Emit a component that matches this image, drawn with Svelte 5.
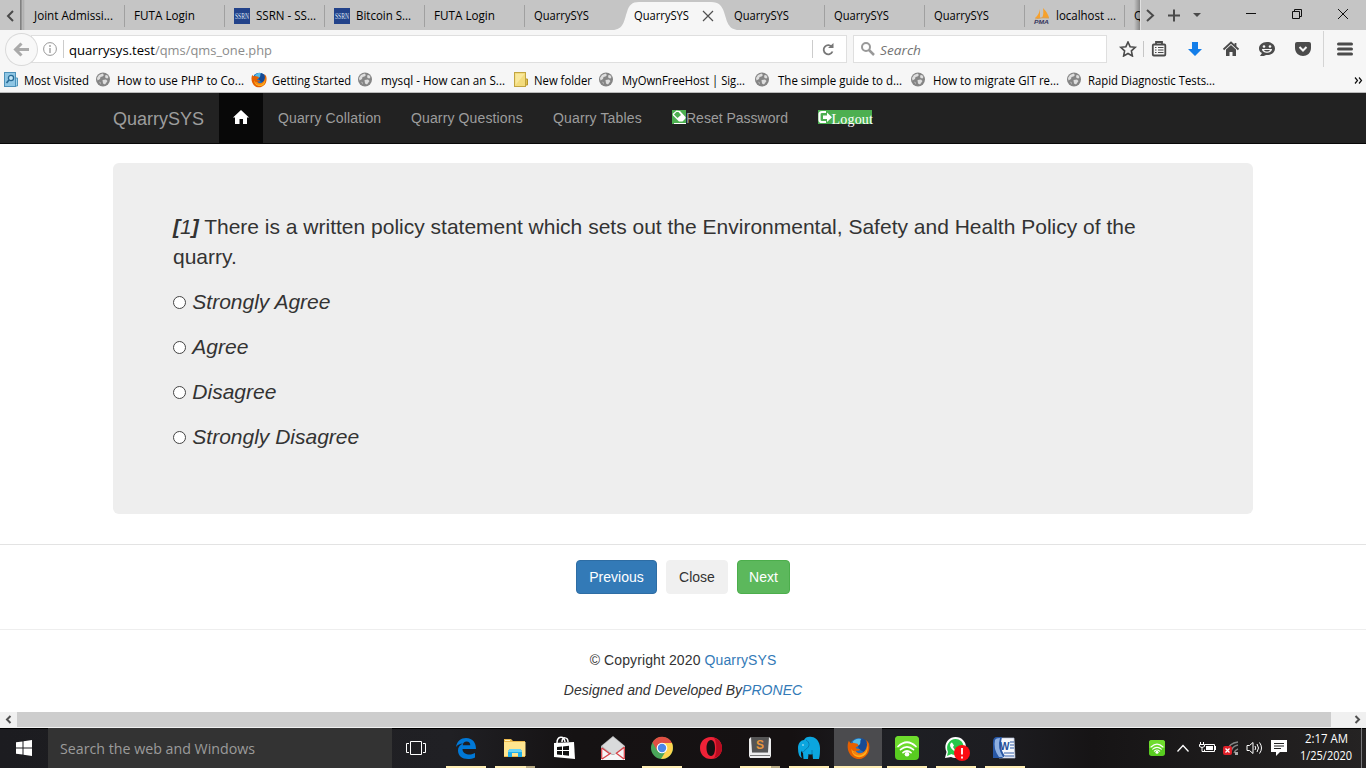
<script>
  const tabs = [
    { text: 'Joint Admissi...', w: 79 },
    { text: 'FUTA Login', w: 61 },
    { text: 'SSRN - SS...', w: 60, icon: 'ssrn' },
    { text: 'Bitcoin S...', w: 55, icon: 'ssrn' },
    { text: 'FUTA Login', w: 61 },
    { text: 'QuarrySYS', w: 55 },
    { text: 'QuarrySYS', w: 55, active: true },
    { text: 'QuarrySYS', w: 55 },
    { text: 'QuarrySYS', w: 55 },
    { text: 'QuarrySYS', w: 55 },
    { text: 'localhost ...', w: 60, icon: 'pma' }
  ];
  const bookmarks = [
    { text: 'Most Visited', w: 65, icon: 'visited', slot: 20, cell: 92 },
    { text: 'How to use PHP to Co...', w: 127, icon: 'globe', slot: 21, cell: 155 },
    { text: 'Getting Started', w: 79, icon: 'firefox', slot: 21, cell: 107 },
    { text: 'mysql - How can an S...', w: 124, icon: 'globe', slot: 23, cell: 155 },
    { text: 'New folder', w: 58, icon: 'folder', slot: 21, cell: 86 },
    { text: 'MyOwnFreeHost | Sig...', w: 123, icon: 'globe', slot: 23, cell: 156 },
    { text: 'The simple guide to d...', w: 124, icon: 'globe', slot: 23, cell: 156 },
    { text: 'How to migrate GIT re...', w: 126, icon: 'globe', slot: 22, cell: 156 },
    { text: 'Rapid Diagnostic Tests...', w: 127, icon: 'globe', slot: 21, cell: 150 }
  ];
  const answers = ['Strongly Agree', 'Agree', 'Disagree', 'Strongly Disagree'];
  const apps = [
    { icon: 'edge', bar: 'one' },
    { icon: 'explorer', bar: 'many' },
    { icon: 'store' },
    { icon: 'mail' },
    { icon: 'chrome', bar: 'one' },
    { icon: 'opera' },
    { icon: 'sublime', bar: 'many' },
    { icon: 'elephant', bar: 'one' },
    { icon: 'firefox', bar: 'full' },
    { icon: 'hotspot', bar: 'one' },
    { icon: 'whatsapp', bar: 'one' },
    { icon: 'word', bar: 'one' }
  ];
</script>

{#snippet label(text, w, h, y, size = 12, fill = '#000', italic = false)}
  <svg class="label" width={w} height={h}>
    <text x="0" {y} font-size={size} {fill} font-style={italic ? 'italic' : 'normal'} textLength={w} lengthAdjust="spacingAndGlyphs">{text}</text>
  </svg>
{/snippet}

{#snippet firefox(size)}
  <svg width={size} height={size} viewBox="0 0 24 24">
    <circle cx="12.5" cy="11" r="10" fill="#1f6fc0" />
    <path d="M8 3C12 0 19 1 22 7c1 5-2 8-4 9l-5-3z" fill="#174a94" />
    <path d="M6 5c3-4 7-4 9-3-2 2 0 4-2 6l-5 3z" fill="#55bce9" />
    <path d="M2 4C0 8 .5 13 2 16c3 7 11 9 16 5 5-3 6-9 5-14-1-2-2-3-3-4 2 6 1 10-2 12-3 3-8 2-9-1 2 1 4 0 5-1-2-1-4 0-5-2l3-2-1-2-5-1C4 7 3 6 2 4z" fill="#e66000" />
    <path d="M20 4c2 6 1 10-2 12-4 3-8 2-9-1-2 1-4-1-4-3-1 5 3 9 8 9 7 0 11-7 7-17z" fill="#ffb11a" />
    <path d="M20 8c1 5-2 8-5 9-2 1-5 0-6-2-2 1-3 0-4-1 2 6 10 7 14 2 2-3 2-5 1-8z" fill="#f28115" />
  </svg>
{/snippet}

{#snippet hotspot(size)}
  <svg width={size} height={size} viewBox="0 0 24 24">
    <rect width="24" height="24" rx="4" fill="#58cc20" />
    <path d="M0 4a4 4 0 0 1 4-4h16a4 4 0 0 1 4 4v8H0z" fill="#6edb2d" />
    <g fill="none" stroke="#fff" stroke-width="1.700" stroke-linecap="round">
      <path d="M3 10.500Q12 2 21 10.500M5.500 13.700q6.500-5.500 13 0M8 16.700q4-3.400 8 0" />
    </g>
    <circle cx="12" cy="18.300" r="2.300" fill="#fff" />
  </svg>
{/snippet}

{#snippet smallIcon(kind)}
  {#if kind === 'ssrn'}
    <svg class="open" width="16" height="16"><rect width="16" height="16" fill="#22428a" /><text x="1" y="11" font-family="Liberation Serif, serif" font-size="8" fill="#dce4f4" textLength="14" lengthAdjust="spacingAndGlyphs">SSRN</text></svg>
  {:else if kind === 'pma'}
    <svg class="open" width="16" height="16"><path d="M6 1v9H1q4-3 5-9zM9 0q5 5 6 10H8Q10 6 9 0z" fill="#f7a12c" /><path d="M1 11q7-2 14-1" stroke="#d6a05b" fill="none" /><text x="0" y="15.500" font-size="6" font-weight="bold" font-style="italic" fill="#35355e" textLength="15" lengthAdjust="spacingAndGlyphs">PMA</text></svg>
  {:else if kind === 'globe'}
    <svg width="15" height="15" viewBox="0 0 15 15"><circle cx="7" cy="7.500" r="7" fill="#858585" /><path d="M1 6 3 3l3.500-1.500L8 3 6.500 4.500l-2 .5L4 7 1.500 8.500zM9 3.500l2-.5 1.500 2-1 1.500L9.500 6zM6.500 8l3.500-.5 1.500 1.500L9 12.500 7 11.500zM3 9.500l1.500 1 .5 2z" fill="#dedede" /></svg>
  {:else if kind === 'visited'}
    <svg width="15" height="16" viewBox="0 0 15 16"><path d="M10 6h3.500v8H10z" fill="#a4d4ec" stroke="#5296bb" /><rect x=".5" y=".5" width="11" height="14" fill="#8fc6e4" stroke="#4c91b9" /><circle cx="7" cy="6" r="2.600" fill="#c4e5f5" stroke="#286b96" stroke-width="1.300" /><path d="M5 8 2.500 11" stroke="#286b96" stroke-width="1.700" /></svg>
  {:else if kind === 'folder'}
    <svg class="folder" width="15" height="16" viewBox="0 0 15 16"><path d="M11 7h2.500v6H10z" fill="#e2c34e" stroke="#b4952b" /><rect x=".5" y=".5" width="11" height="14" fill="#f3dc7d" stroke="#c2a541" /><path d="M1.500 13V2h9z" fill="#fbedaa" opacity=".7" /></svg>
  {:else if kind === 'firefox'}
    {@render firefox(16)}
  {/if}
{/snippet}

{#snippet appIcon(kind)}
  {#if kind === 'firefox'}
    {@render firefox(23)}
  {:else if kind === 'hotspot'}
    {@render hotspot(24)}
  {:else}
    <svg width="24" height="24" viewBox="0 0 24 24">
      {#if kind === 'edge'}
        <path d="M2 11C3 5 7 2 12 2c7 0 10 5 10 11H8.500c0 4 3.500 5.500 7 5.500 2 0 4-.6 5.500-1.500v4.500C19 22.700 16 23 14 23c-6 0-10-3.500-10-8.500 0-3 1.500-5.500 5-7C6 7.500 3.500 9 2 11zm6.700-1.700h7.600C16.300 7 15 5.500 12.700 5.500S8.900 7 8.700 9.300z" fill="#0078d7" />
      {:else if kind === 'explorer'}
        <path d="M1 4V3h7l2 2h12v16H1z" fill="#ebb94d" /><path d="M1 6h21.500v14H1z" fill="#ffe58f" /><path d="M2 4h5v1H2z" fill="#fff3bf" /><path d="M5 21v-6l2-2h10l2 2v6h-4v-4H9v4z" fill="#21b0ea" /><path d="M5 16v-1l2-2h10l2 2v1z" fill="#68d5f6" />
      {:else if kind === 'store'}
        <path d="M2 7l20-1 1 17L2 21z" fill="#fff" /><path d="M5 7c0-7 7-8 8-1M10 6c0-6 6-5 6 0" fill="none" stroke="#fff" stroke-width="1.500" /><path d="M5 11l5-.5V14H5zM11 10.400l6-.7V14h-6zM5 15h5v4l-5-.5zM11 15h6v4.800l-6-.7z" fill="#111" />
      {:else if kind === 'mail'}
        <path d="M0 10 12 0l12 10v14H0z" fill="#b5b6b7" /><path d="M1 10 12 1l11 9-9 8h-3z" fill="#d9dadb" /><path d="M0 12l11 7h2l11-8v13H0z" fill="#f5f5f6" /><path d="M.7 12v11M23.300 11v12M1 12l8 6M23 11.500l-8 6M1 23l9-6M23 23l-8-6" fill="none" stroke="#d83f45" stroke-width="1.200" />
      {:else if kind === 'chrome'}
        <circle cx="12" cy="12" r="11" fill="#4ba65a" /><path d="M2.500 6.500A11 11 0 0 1 22 7H12L7.500 15z" fill="#e04f43" /><path d="M12 7h10c3 8-2 16-11 16l5.500-9z" fill="#ffd34e" /><circle cx="12" cy="12" r="5.300" fill="#fff" /><circle cx="12" cy="12" r="4.200" fill="#4c87e8" />
      {:else if kind === 'opera'}
        <path fill-rule="evenodd" d="M12 1C5 1 1 6 1 12s4 11 11 11 11-5 11-11S19 1 12 1zm0 3c3 0 4 4 4 8s-1 8-4 8-4.500-4-4.500-8S9 4 12 4z" fill="#ee2237" /><path d="M15 2c5 1 8 5 8 10s-3 9-8 10c3-3 3-17 0-20z" fill="#b80c20" />
      {:else if kind === 'sublime'}
        <path d="M3 1h18l2 2v17l-1 2H2l-1-2V3z" fill="#ededed" /><path d="M3 1h18l-1 15H4z" fill="#555" /><path d="M4 16h16v1H4z" fill="#999" /><path d="M2 19h20v1H2z" fill="#777" /><text x="8" y="13" font-size="12" font-weight="bold" fill="#e9963c">S</text>
      {:else if kind === 'elephant'}
        <path d="M1 12c0-5 3-8 6-8 1-3 5-4 8-3 4 0 8 5 8 11 0 3 0 7-1 11h-6l-.5-5q-2 1-4 0L11 23H6.500L6 17l-2-2v4q.5 2 1 3-4-1-4-10z" fill="#0ba6df" /><path d="M9 4c4 2 4 7 0 9M4.500 15c1 1 3 1 4-2M15 18V14" stroke="#0870a5" fill="none" stroke-width=".8" /><circle cx="6" cy="9" r=".7" fill="#fff" />
      {:else if kind === 'whatsapp'}
        <path d="M1 22 2.500 16C-1 9 4 1 11.500 1 18 1 22 6 22 11c0 8-8 13-15 10z" fill="#fff" /><path d="M3 20l1-4C1 9 6 3 11.500 3c9 0 11 12 4 15-3 2-6 1-8 0z" fill="#28c74b" /><path d="M8 6.500l2 3-1 1.500c1 2 2 3 4 4l1.500-1.500 3 1c0 3-3 3-6 1.500C8 14 6 11 6 9c0-1 1-2.500 2-2.500z" fill="#fff" />
      {:else if kind === 'word'}
        <path d="M6 2h15l1 20H6z" fill="#f6f8fc" stroke="#b7c3db" stroke-width=".7" /><path d="M4 1h5C7 9 8 15 12 20l-3 2H0V6q0-5 4-5z" fill="#2857a4" /><path d="M2 4q1-2 5-2Q4 12 10 21H6Q0 13 2 4z" fill="#8eafe0" /><path d="M17 6h4M17 9h4M17 12h4M11 17h10M12 20h9" stroke="#315da7" stroke-width="1.200" /><text x="7" y="14" font-size="10" font-weight="bold" fill="#244e98">W</text>
      {/if}
    </svg>
  {/if}
{/snippet}

<div class="screen">
  <div class="tabstrip">
    <div class="scroll-left"><svg width="20" height="30"><path d="M13 11 8 16l5 5" fill="none" stroke="#4a4a4a" stroke-width="2" /></svg></div>
    <div class="shade left"></div>
    {#each tabs as tab, i}
      <div class="tab" class:active={tab.active} class:plain={i === 5}>
        {#if tab.active}
          <svg class="tab-shape" width="128" height="30"><path d="M0 30C12 30 12 20 15 12 17 5 20 2 27 2h72c8 0 11 4 13 10 3 9 4 18 15 18z" fill="#f6f6f6" /></svg>
        {/if}
        <div class="tab-content">
          {#if tab.icon}<div class="tab-icon">{@render smallIcon(tab.icon)}</div>{/if}
          {@render label(tab.text, tab.w, 30, 20)}
          {#if tab.active}
            <svg class="close" width="12" height="30"><path d="M1 11l10 10M11 11 1 21" stroke="#505050" stroke-width="1.200" /></svg>
          {/if}
        </div>
      </div>
    {/each}
    <div class="cut">{@render label('Q', 9, 30, 20)}</div>
    <svg class="tab-buttons" width="65" height="30"><path d="M6 10l6 5.500L6 21" fill="none" stroke="#4a4a4a" stroke-width="2" /><path d="M27 15.500h12M33 9.500v12" stroke="#4a4a4a" stroke-width="2" /><path d="M52 13h8l-4 4z" fill="#4a4a4a" /></svg>
    <svg width="160" height="30"><g fill="none" stroke="#111"><path d="M40 13.500h10M86.500 11.500h7v7h-7zM88.500 11.500v-2h7v7h-2M132 9l10 10M142 9l-10 10" /></g></svg>
  </div>

  <div class="toolbar">
    <div class="back"><svg width="31" height="31"><path d="M9 15.500h14M15.500 9.500l-6 6 6 6" fill="none" stroke="#aaa" stroke-width="3" /></svg></div>
    <div class="url">
      <svg width="25" height="26"><circle cx="12" cy="13" r="6.400" fill="none" stroke="#989898" /><path d="M12 12v5M12 9v2" stroke="#989898" stroke-width="1.300" /></svg>
      <div class="divider"></div>
      <div class="address">{@render label('quarrysys.test', 86, 26, 19, 13.5)}{@render label('/qms/qms_one.php', 117, 26, 19, 13.5, '#8b8b8b')}</div>
      <div class="divider"></div>
      <svg width="33" height="26"><path d="M19 11A4.600 4.600 0 1 0 19.500 15.500" fill="none" stroke="#777" stroke-width="1.800" /><path d="M15 12h5.500V7z" fill="#777" /></svg>
    </div>
    <div class="search">
      <svg width="26" height="26"><circle cx="12" cy="11" r="4" fill="none" stroke="#999" stroke-width="2" /><path d="M15 14l5 5" stroke="#999" stroke-width="2.500" /></svg>
      {@render label('Search', 41, 26, 19, 13.5, '#737373', true)}
    </div>
    <div class="tools">
      <svg style:width="32px" height="16" viewBox="-8 0 32 16"><path d="M8 1l2.100 4.700 5.100.6-3.800 3.500 1 5.200L8 12.500 3.600 15l1-5.200L.8 6.300l5.100-.6z" fill="none" stroke="#4b4b4b" stroke-width="1.600" /></svg>
      <div class="rule"></div>
      <svg style:width="30px" height="16" viewBox="-7 0 30 16"><path d="M5 3V1h6v2" fill="none" stroke="#4b4b4b" stroke-width="1.800" /><rect x="1.800" y="3.500" width="12.500" height="11" rx="1" fill="none" stroke="#4b4b4b" stroke-width="1.800" /><path d="M4 6.500h1.500M7 6.500h5.500M4 9h1.500M7 9h5.500M4 11.500h1.500M7 11.500h5.500" stroke="#4b4b4b" stroke-width="1.200" /></svg>
      <svg style:width="42px" height="16" viewBox="-13 0 42 16"><path d="M5 1h6v7h4l-7 7-7-7h4z" fill="#147ee9" /></svg>
      <svg style:width="30px" height="16" viewBox="-7 0 30 16"><path d="M.5 8.500 8 1.500l7.500 7M12.500 2v4" fill="none" stroke="#4b4b4b" stroke-width="1.800" /><path d="M3 8.500 8 4l5 4.500V15H9.500v-4h-3v4H3z" fill="#4b4b4b" /></svg>
      <svg style:width="42px" height="16" viewBox="-13 0 42 16"><path d="M8 1c5 0 8 3 8 6.500S13 14 8 14c-1 0-2 0-3 1H1l2-3C1 11 0 9.500 0 7.500 0 4 3 1 8 1z" fill="#4b4b4b" /><circle cx="5" cy="5.500" r="1.300" fill="#f6f6f6" /><circle cx="11" cy="5.500" r="1.300" fill="#f6f6f6" /><path d="M3 8h10c0 5-10 5-10 0z" fill="#f6f6f6" /><path d="M5 9h6c-1 2-5 2-6 0z" fill="#4b4b4b" /></svg>
      <svg style:width="30px" height="16" viewBox="-7 0 30 16"><path d="M0 3q0-2 2-2h12q2 0 2 2v4c0 5-4 8-8 8s-8-3-8-8z" fill="#4b4b4b" /><path d="M4.500 6 8 9.500 11.500 6" fill="none" stroke="#f6f6f6" stroke-width="2" /></svg>
      <div class="menu"><svg width="16" height="16"><path d="M1.500 3h13M1.500 8h13M1.500 13h13" stroke="#4b4b4b" stroke-width="3" stroke-linecap="round" /></svg></div>
    </div>
  </div>

  <div class="bookmarks">
    {#each bookmarks as b}
      <div class="bookmark" style:width="{b.cell}px">
        <div class="bookmark-icon" style:width="{b.slot}px">{@render smallIcon(b.icon)}</div>
        {@render label(b.text, b.w, 24, 17)}
      </div>
    {/each}
    <svg class="more" width="10" height="24"><path d="M1 9.500l2.500 3L1 15.500M5 9.500l2.500 3-2.500 3" fill="none" stroke="#111" stroke-width="1.200" /></svg>
  </div>

  <main>
    <nav>
      <div class="brand">QuarrySYS</div>
      <div class="item home"><svg width="16" height="14" viewBox="0 0 16 14"><path d="M8 0l8 7.500h-2V14h-4V9H6.500v5H2V7.500H0z" fill="#fff" /></svg></div>
      <div class="item collation">Quarry Collation</div>
      <div class="item questions">Quarry Questions</div>
      <div class="item tables">Quarry Tables</div>
      <div class="item reset"><svg class="green" width="14" height="14"><path d="M4.500.5 8 1l5.500 6q.5 1-.5 2l-2.500 2.500H7L1 5.500q-.8-1 0-2z" fill="#fff" /><path d="M4.500 2 6.500 2 9 5 5.500 8 2 4.500z" fill="#4caf50" /><path d="M2 13.500h12" stroke="#fff" /></svg>Reset Password</div>
      <div class="item logout"><span><svg width="14" height="14"><path d="M8 2H4Q1.500 2 1.500 4v6q0 2 2.500 2h4" fill="none" stroke="#fff" stroke-width="2.200" /><path d="M5 5.500h4V2.500l5 4.700-5 4.800V9H5z" fill="#fff" /></svg><b>Logout</b></span></div>
    </nav>

    <section class="jumbotron">
      <p><em><strong>[</strong>1<strong>]</strong></em> There is a written policy statement which sets out the Environmental, Safety and Health Policy of the quarry.</p>
      {#each answers as answer}
        <p class="answer"><span class="radio"></span><em>{answer}</em></p>
      {/each}
    </section>

    <div class="actions">
      <div class="btn primary">Previous</div>
      <div class="btn plain">Close</div>
      <div class="btn success">Next</div>
    </div>

    <footer>
      <p class="copyright">© Copyright 2020 <a>QuarrySYS</a></p>
      <p class="credit"><em>Designed and Developed By<a>PRONEC</a></em></p>
    </footer>
  </main>

  <div class="scrollbar">
    <svg width="17" height="15"><path d="M10.500 4 7 7.500l3.500 3.500" fill="none" stroke="#505050" stroke-width="2" /></svg>
    <div class="thumb"></div>
    <svg width="35" height="15"><path d="M24.500 4 28 7.500 24.500 11" fill="none" stroke="#505050" stroke-width="2" /></svg>
  </div>

  <div class="taskbar">
    <div class="start"><svg width="16" height="16"><path d="M0 2.300 6.500 1.400V7.500H0zM7.500 1.200 16 0v7.500H7.500zM0 8.500h6.500v6.100L0 13.700zM7.500 8.500H16V16l-8.500-1.200z" fill="#fff" /></svg></div>
    <div class="task-search">{@render label('Search the web and Windows', 195, 40, 26, 15, '#9b9b9b')}</div>
    <div class="task-view"><svg width="20" height="14"><path d="M4.500.5h11v13h-11zM3 2.500H.5v9H3M17 2.500h2.500v9H17" fill="none" stroke="#fff" /></svg></div>
    <div class="apps">
      {#each apps as app}
        <div class="app" class:current={app.bar === 'full'}>
          {@render appIcon(app.icon)}
          {#if app.icon === 'whatsapp'}
            <svg class="alert" width="16" height="16"><circle cx="8" cy="8" r="8" fill="#fb0b12" /><path d="M8 3v6.500M8 11.500v2" stroke="#fff" stroke-width="1.800" /></svg>
          {/if}
          {#if app.bar}<div class="underline {app.bar}"></div>{/if}
        </div>
      {/each}
    </div>
    <div class="tray">
      {@render hotspot(16)}
      <svg class="chevron" width="14" height="16"><path d="M1.500 11.500 7 5.500l5.500 6" fill="none" stroke="#fff" stroke-width="1.300" /></svg>
      <svg class="battery" width="17" height="16"><path d="M6 4.500h9.500v7h-10v-2" fill="none" stroke="#fff" /><path d="M7 6h7v4H7zM15 6h2v4h-2z" fill="#fff" /><path d="M1.500 2v2.500M4.500 2v2.500M.5 4.500h5v2q-2.500 2-5 0zM3 7v4.500h3" fill="none" stroke="#fff" /></svg>
      <svg class="wifi" width="17" height="16"><g fill="none" stroke="#858585" stroke-width="1.500"><path d="M4 11Q6 3 15 2M8 12q1-6 7-7M11 13q1-3 4-4" /></g><path d="M12 12h3v3h-3z" fill="#aaa" /><rect x="0" y="6" width="9" height="9" rx="2" fill="#df2029" /><path d="M2.500 8.500l4 4M6.500 8.500l-4 4" stroke="#fff" stroke-width="1.300" /></svg>
      <svg class="speaker" width="18" height="16"><path d="M1 5.500h2.500L7 2.500v11l-3.500-3H1z" fill="none" stroke="#fff" /><path d="M9 6q1.500 2 0 4M11 4q3 4 0 8M13.500 2.500q4 5.500 0 11" fill="none" stroke="#fff" /></svg>
      <svg class="note" width="16" height="16"><path d="M0 0h16v12H9l-4 4v-4H0z" fill="#fff" /><path d="M3 3.500h10M3 6h10M3 8.500h7" stroke="#222" /></svg>
    </div>
    <div class="clock">
      {@render label('2:17 AM', 43, 17, 14, 12, '#fff')}
      {@render label('1/25/2020', 52, 17, 14, 12, '#fff')}
    </div>
    <div class="peek"></div>
  </div>
</div>

<style>
  :global(body) { margin: 0; overflow: hidden; }
  svg { display: block; flex: none; }
  .open { overflow: visible; }
  .label { overflow: visible; font-family: 'Open Sans', 'Noto Sans', sans-serif; }
  .screen { width: 1366px; height: 768px; display: flex; flex-direction: column; overflow: hidden; background: #fff; font-family: 'Liberation Sans', Arial, sans-serif; }

  .tabstrip { height: 30px; flex: none; display: flex; background: #c5c5c5; overflow: hidden; }
  .scroll-left { width: 20px; }
  .shade.left { width: 5px; background: linear-gradient(90deg, #777, #9b9b9b 35%, #c5c5c5 40%, #aaa 60%, #c5c5c5); }
  .tab { position: relative; width: 100px; height: 30px; flex: none; display: flex; }
  .tab::after { content: ''; width: 1px; height: 22px; margin: 5px 0 0; background: #a0a0a0; position: absolute; right: 0; }
  .tab.active::after, .tab.plain::after { display: none; }
  .tab-shape { position: absolute; left: -13px; top: 0; }
  .tab-content { position: relative; display: flex; padding-left: 9px; }
  .tab-icon { width: 22px; padding-top: 8px; }
  .close { margin-left: 13px; }
  .cut { width: 16px; flex: none; padding-left: 9px; box-sizing: border-box; overflow: hidden; background: linear-gradient(90deg, #c5c5c5 60%, #858585); border-right: 1px solid #e0e0e0; }
  .tab-buttons { margin-right: auto; }

  .toolbar { height: 38px; flex: none; display: flex; align-items: center; background: #f6f6f6; }
  .back { width: 31px; height: 31px; margin-left: 6px; flex: none; border-radius: 50%; box-shadow: 0 0 0 1px #d9d9d9; background: #f8f8f8; z-index: 1; }
  .url { width: 816px; height: 28px; margin-left: -6px; padding-left: 6px; box-sizing: border-box; display: flex; align-items: center; background: #fff; border: 1px solid #dfdfdf; }
  .divider { width: 1px; height: 18px; flex: none; background: #ccc; }
  .address { display: flex; flex: 1; padding-left: 5px; }
  .search { width: 254px; height: 28px; margin-left: 6px; box-sizing: border-box; display: flex; align-items: center; background: #fff; border: 1px solid #dfdfdf; }
  .tools { display: flex; align-items: center; margin-left: 5px; }
  .rule { width: 1px; height: 16px; margin-left: -1px; background: #c6c6c6; }
  .menu { width: 42px; height: 36px; margin-left: 5px; border-left: 1px solid #d4d4d4; display: flex; align-items: center; justify-content: center; }

  .bookmarks { height: 25px; flex: none; display: flex; padding-left: 4px; box-sizing: border-box; background: #f6f6f6; border-bottom: 1px solid #bababa; }
  .bookmark { display: flex; flex: none; }
  .bookmark-icon { flex: none; padding-top: 4px; }
  .folder { margin-left: 1px; }
  .more { margin-left: auto; margin-right: 2px; }

  main { height: 619px; flex: none; display: flex; flex-direction: column; color: #333; font-size: 14px; line-height: 20px; }
  nav { height: 50px; flex: none; display: flex; padding-left: 113px; background: #222; border-bottom: 1px solid #080808; color: #9d9d9d; }
  .brand { width: 106px; padding-top: 16px; font-size: 18px; }
  .item { padding: 15px 0 15px 15px; height: 20px; display: flex; white-space: nowrap; }
  .home { width: 29px; background: #080808; }
  .home svg { margin: 2px 0 0 -1px; }
  .collation { width: 118px; letter-spacing: .13px; }
  .questions { width: 127px; letter-spacing: .13px; }
  .tables { width: 104px; letter-spacing: .15px; }
  .reset { width: 131px; }
  .green { margin-top: 2px; background: #4caf50; }
  .logout span { display: flex; width: 54px; height: 14px; margin-top: 2px; background: #4caf50; color: #fff; }
  .logout b { margin-left: -.5px; font: 14px/19px 'Liberation Serif', 'Times New Roman', serif; letter-spacing: .2px; }
  .jumbotron { width: 1140px; height: 351px; box-sizing: border-box; margin: 19px 0 0 113px; padding: 49px 60px 47px; border-radius: 6px; background: #eee; font-size: 21px; line-height: 30px; }
  p { margin: 0 0 15px; }
  .answer { display: flex; align-items: center; gap: 6.3px; }
  .radio { width: 13px; height: 13px; box-sizing: border-box; border: 1px solid #444; border-radius: 50%; background: #fff; }
  .actions { margin-top: 30px; padding-top: 15px; height: 69px; flex: none; border-top: 1px solid #e3e3e3; display: flex; justify-content: center; gap: 9px; }
  .btn { height: 34px; box-sizing: border-box; padding: 6px 0; border: 1px solid; border-radius: 4px; text-align: center; }
  .primary { width: 81px; background: #337ab7; border-color: #2e6da4; color: #fff; }
  .btn.plain { width: 62px; background: #f0f0f0; border-color: #f0f0f0; }
  .success { width: 53px; background: #5cb85c; border-color: #4cae4c; color: #fff; }
  footer { border-top: 1px solid #eee; padding-top: 20px; text-align: center; }
  footer p { margin-bottom: 10px; }
  .copyright { letter-spacing: .11px; }
  .credit { letter-spacing: .03px; }
  a { color: #337ab7; }

  .scrollbar { height: 16px; flex: none; display: flex; background: #f0f0f0; }
  .thumb { flex: 1; height: 15px; background: #cdcdcd; }

  .taskbar { height: 40px; flex: none; display: flex; background: linear-gradient(90deg, #1c1c20, #202024 33%, #151213 42%, #151112 58%, #1e1f24 65%, #1d1d21 73%, #161415 80%, #252323); box-shadow: inset 0 1px #000; }
  .start { width: 48px; display: flex; align-items: center; justify-content: center; }
  .task-search { width: 344px; box-sizing: border-box; padding-left: 12px; background: #333; }
  .task-view { width: 50px; display: flex; align-items: center; padding-left: 14px; box-sizing: border-box; }
  .apps { display: flex; gap: 1px; }
  .app { width: 48px; height: 40px; position: relative; display: flex; align-items: center; justify-content: center; }
  .current { background: #4b4b4e; }
  .alert { position: absolute; left: 22px; top: 17px; }
  .underline { position: absolute; left: 4px; bottom: 0; width: 40px; height: 2px; background: #ffeeb4; }
  .underline.full { left: 0; width: 48px; }
  .underline.many { background: linear-gradient(90deg, #ffeeb4 31px, #b8aa83 31px); }
  .tray { width: 138px; margin-left: 120px; display: flex; align-items: center; }
  .chevron { margin-left: 11px; }
  .battery { margin-left: 9px; }
  .wifi { margin-left: 7px; }
  .speaker { margin-left: 6px; }
  .note { margin-left: 7px; }
  .clock { width: 52px; margin-left: 13px; padding-top: 1px; display: flex; flex-direction: column; align-items: center; }
  .peek { width: 1px; margin-left: 9px; background: #77777a; }
</style>
